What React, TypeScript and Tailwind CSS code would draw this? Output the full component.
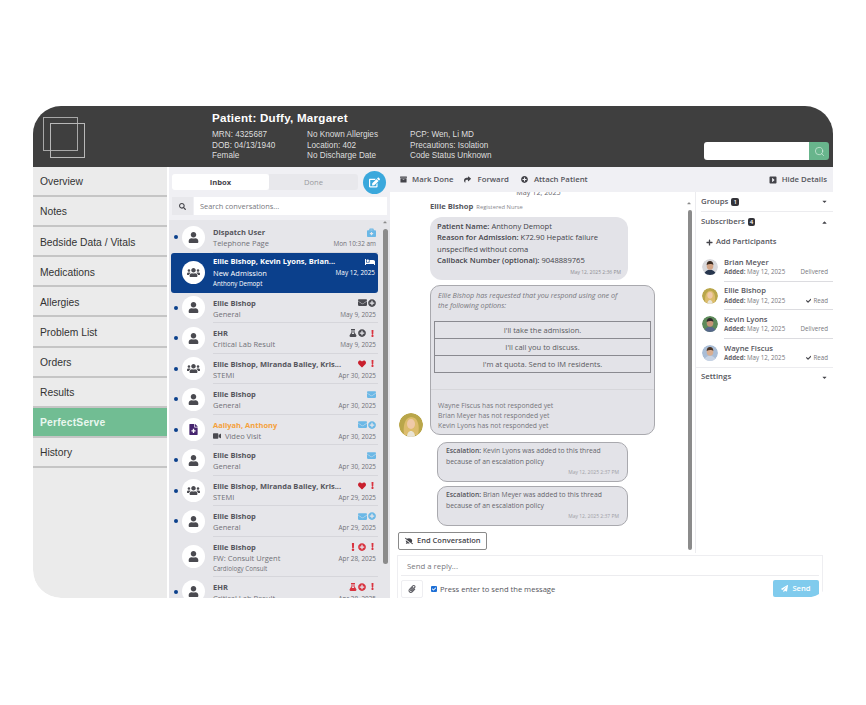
import {
  FaUser, FaUsers, FaEnvelope, FaPlusCircle, FaBed, FaHeart, FaExclamation, FaVideo, FaFlask,
  FaEdit, FaSearch, FaPaperclip, FaPaperPlane, FaShare, FaPlus, FaCheck, FaCaretDown, FaCaretUp,
  FaCommentSlash, FaArchive, FaCaretSquareRight, FaBriefcaseMedical, FaFileMedical,
} from "react-icons/fa";
import { Search } from "lucide-react";
import type { ReactNode } from "react";

const navItems = ["Overview", "Notes", "Bedside Data / Vitals", "Medications", "Allergies", "Problem List", "Orders", "Results", "PerfectServe", "History"];

type Conv = {
  title: string;
  sub: string;
  date: string;
  extra?: string;
  group?: boolean;
  unread?: boolean;
  selected?: boolean;
  orange?: boolean;
  clip?: boolean;
  video?: boolean;
  icons: ReactNode;
};

const mail = <FaEnvelope className="text-[9px] text-[#6bb8e6]" />;
const plusBlue = <FaPlusCircle className="text-[8px] text-[#6bb8e6]" />;
const plusGray = <FaPlusCircle className="text-[8px] text-[#4a4a50]" />;
const plusRed = <FaPlusCircle className="text-[8px] text-[#d9333f]" />;
const bang = <FaExclamation className="ml-[2px] text-[7px] text-[#d9333f]" />;

const conversations: Conv[] = [
  { title: "Dispatch User", sub: "Telephone Page", date: "Mon 10:32 am", unread: true, icons: <FaBriefcaseMedical className="text-[9px] text-[#6bb8e6]" /> },
  { title: "Ellie Bishop, Kevin Lyons, Brian...", sub: "New Admission", date: "May 12, 2025", extra: "Anthony Demopt", group: true, selected: true, icons: <FaBed className="text-[10px] text-white" /> },
  { title: "Ellie Bishop", sub: "General", date: "May 9, 2025", unread: true, icons: <><FaEnvelope className="text-[9px] text-[#4a4a50]" />{plusGray}</> },
  { title: "EHR", sub: "Critical Lab Result", date: "May 9, 2025", unread: true, icons: <><FaFlask className="text-[8px] text-[#4a4a50]" />{plusGray}{bang}</> },
  { title: "Ellie Bishop, Miranda Bailey, Kris...", sub: "STEMI", date: "Apr 30, 2025", group: true, unread: true, icons: <><FaHeart className="text-[8px] text-[#c9202e]" />{bang}</> },
  { title: "Ellie Bishop", sub: "General", date: "Apr 30, 2025", unread: true, icons: mail },
  { title: "Aaliyah, Anthony", sub: "Video Visit", date: "Apr 30, 2025", unread: true, orange: true, video: true, clip: true, icons: <>{mail}{plusBlue}</> },
  { title: "Ellie Bishop", sub: "General", date: "Apr 30, 2025", unread: true, icons: mail },
  { title: "Ellie Bishop, Miranda Bailey, Kris...", sub: "STEMI", date: "Apr 29, 2025", group: true, unread: true, icons: <><FaHeart className="text-[8px] text-[#c9202e]" />{bang}</> },
  { title: "Ellie Bishop", sub: "General", date: "Apr 29, 2025", unread: true, icons: <>{mail}{plusBlue}</> },
  { title: "Ellie Bishop", sub: "FW: Consult Urgent", date: "Apr 28, 2025", extra: "Cardiology Consult", icons: <><FaExclamation className="text-[8px] text-[#d9333f]" />{plusRed}{bang}</> },
  { title: "EHR", sub: "Critical Lab Result", date: "Apr 28, 2025", unread: true, icons: <><FaFlask className="text-[8px] text-[#d9333f]" />{plusRed}{bang}</> },
];

function Face({ skin, hair, bg, size, shirt }: { skin: string; hair: string; bg: string; size: number; shirt: string }) {
  return (
    <svg width={size} height={size} viewBox="0 0 24 24" className="shrink-0 rounded-full">
      <circle cx="12" cy="12" r="12" fill={bg} />
      <path d="M3 24c1-6 5-8 9-8s8 2 9 8z" fill={shirt} />
      <ellipse cx="12" cy="10" rx="5" ry="6" fill={skin} />
      <path d="M7 9c0-4 2-6 5-6s5 2 5 6c-2-2-7-2-10 0z" fill={hair} />
    </svg>
  );
}

function BlondeFace({ size }: { size: number }) {
  return (
    <svg width={size} height={size} viewBox="0 0 24 24" className="shrink-0 rounded-full">
      <circle cx="12" cy="12" r="12" fill="#b9a64a" />
      <path d="M5 22c-1-8 0-17 7-18 7 0 9 9 7 18z" fill="#dcbc6c" />
      <ellipse cx="12" cy="11" rx="4" ry="5" fill="#efc9a8" />
      <path d="M8 24c0-4 2-6 4-6s4 2 4 6z" fill="#e9e4d6" />
    </svg>
  );
}

function ConversationRow({ c }: { c: Conv }) {
  const tall = !!c.extra;
  if (c.selected) {
    return (
      <div className="ml-[2px] mr-[12px] flex h-[40px] items-center rounded-[3px] bg-[#0b408c] pr-[3px] text-white">
        <div className="ml-[11px] flex h-[23px] w-[23px] shrink-0 items-center justify-center rounded-full bg-white">
          <FaUsers className="text-[13px] text-[#4a4a50]" />
        </div>
        <div className="ml-[8px] min-w-0 flex-1">
          <div className="flex items-center justify-between">
            <span className="text-[7.5px] font-bold leading-[11px]">{c.title}</span>
            {c.icons}
          </div>
          <div className="flex items-center justify-between">
            <span className="text-[7.5px] leading-[12px]">{c.sub}</span>
            <span className="text-[6.4px] leading-[12px]">{c.date}</span>
          </div>
          <div className="text-[6.2px] leading-[10px]">{c.extra}</div>
        </div>
      </div>
    );
  }
  return (
    <div className={`${tall ? "h-[40px]" : "h-[30.5px]"} mr-[12px] flex items-center pl-[5px]`}>
      <span className={`h-[4px] w-[4px] shrink-0 rounded-full ${c.unread ? "bg-[#0b408c]" : ""}`} />
      <div className="ml-[4px] flex h-[23px] w-[23px] shrink-0 items-center justify-center rounded-full bg-white">
        {c.clip ? (
          <FaFileMedical className="text-[11px] text-[#46256f]" />
        ) : c.group ? (
          <FaUsers className="text-[13px] text-[#4a4a50]" />
        ) : (
          <FaUser className="text-[11px] text-[#4a4a50]" />
        )}
      </div>
      <div className="ml-[8px] h-full min-w-0 flex-1 border-b border-[#d6d6db] pr-[2px] pt-[4px]">
        <div className="flex items-center justify-between">
          <span className={`text-[7.5px] font-bold leading-[12px] ${c.orange ? "text-[#f5a13c]" : "text-[#55555c]"}`}>{c.title}</span>
          <span className="flex items-center gap-[1px]">{c.icons}</span>
        </div>
        <div className="flex items-center justify-between">
          <span className="flex items-center gap-[4px] text-[7.5px] leading-[11px] text-[#717178]">
            {c.video && <FaVideo className="text-[8px] text-[#4a4a50]" />}
            {c.sub}
          </span>
          <span className="text-[6.4px] leading-[11px] text-[#717178]">{c.date}</span>
        </div>
        {c.extra && <div className="text-[6.2px] leading-[10px] text-[#717178]">{c.extra}</div>}
      </div>
    </div>
  );
}

function Escalation({ name }: { name: string }) {
  return (
    <div className="ml-[47px] h-[40px] w-[191px] rounded-[10px] border border-[#a9a9ae] bg-[#e3e3e8] px-[8px] pt-[3px] text-[6.8px] leading-[10.5px] text-[#66666c]">
      <div>
        <b className="font-semibold text-[#55555c]">Escalation:</b> {name} was added to this thread
      </div>
      <div>because of an escalation policy</div>
      <div className="mt-[1px] text-right text-[5px] leading-[8px] text-[#a0a0a6]">May 12, 2025 2:37 PM</div>
    </div>
  );
}

const subscribers = [
  { name: "Brian Meyer", status: "Delivered", face: <Face size={16} skin="#d3a587" hair="#3a2a20" bg="#d9d9dc" shirt="#27364d" /> },
  { name: "Ellie Bishop", status: "Read", face: <BlondeFace size={16} /> },
  { name: "Kevin Lyons", status: "Delivered", face: <Face size={16} skin="#c79478" hair="#2c2a2a" bg="#5d8a5a" shirt="#56688a" /> },
  { name: "Wayne Fiscus", status: "Read", face: <Face size={16} skin="#d9ae90" hair="#4a3426" bg="#a9bdd6" shirt="#c7d3e4" /> },
];

export default function App() {
  return (
    <div className="h-[705px] w-[866px] overflow-hidden bg-white pl-[33px] pt-[106px] font-['Open_Sans',sans-serif]">
      <div className="flex h-[492px] w-[800px] flex-col overflow-hidden rounded-[28px] bg-white">
        <header className="flex h-[61px] shrink-0 bg-[#3f3f3f] font-['Liberation_Sans',sans-serif] text-[#dedede]">
          <div className="w-[179px] shrink-0 pl-[10px] pt-[11px]">
            <div className="relative h-[42px] w-[43px]">
              <div className="h-[34px] w-[35px] border border-[#a8a8a8]" />
              <div className="absolute left-[7px] top-[6px] h-[35px] w-[35px] border border-[#b8b8b8]" />
            </div>
          </div>
          <div className="w-[492px] shrink-0 pt-[5px]">
            <div className="text-[11.6px] font-bold leading-[14px] tracking-[0.25px] text-white">Patient: Duffy, Margaret</div>
            <div className="mt-[5px] flex text-[8.2px] leading-[10.6px]">
              <div className="w-[95px]">
                <div>MRN: 4325687</div>
                <div>DOB: 04/13/1940</div>
                <div>Female</div>
              </div>
              <div className="w-[103px]">
                <div>No Known Allergies</div>
                <div>Location: 402</div>
                <div>No Discharge Date</div>
              </div>
              <div>
                <div>PCP: Wen, Li MD</div>
                <div>Precautions: Isolation</div>
                <div>Code Status Unknown</div>
              </div>
            </div>
          </div>
          <div className="mb-[7px] flex h-[18px] w-[125px] shrink-0 self-end">
            <div className="w-[105px] rounded-l-[3px] bg-white" />
            <div className="flex w-[20px] items-center justify-center rounded-r-[3px] bg-[#68b58c]">
              <Search size={11} strokeWidth={1.5} className="text-[#d8efe2]" />
            </div>
          </div>
        </header>

        <div className="flex min-h-0 flex-1">
          <nav className="w-[134px] shrink-0 rounded-bl-[28px] bg-[#ebebeb] font-['Liberation_Sans',sans-serif]">
            {navItems.map((item) => (
              <div
                key={item}
                className={`flex h-[30.1px] items-center border-b-2 border-[#c5c5c5] pl-[7px] pt-[2px] text-[10.3px] ${
                  item === "PerfectServe" ? "bg-[#71bd93] font-bold tracking-[0.2px] text-[#e9f7ef]" : "text-[#333333]"
                }`}
              >
                {item}
              </div>
            ))}
          </nav>

          <section className="relative ml-[2px] flex w-[221px] shrink-0 flex-col bg-[#e6e6ea]">
            <div className="flex h-[30px] shrink-0 items-center bg-[#f0f0f4] pl-[3px]">
              <div className="flex h-[16px] w-[186px] text-[7.6px] font-semibold leading-[16px]">
                <div className="w-[97px] rounded-[3px] bg-white text-center font-bold text-[#44444a]">Inbox</div>
                <div className="w-[89px] rounded-r-[3px] bg-[#e8e8ec] text-center font-normal text-[#9a9aa0]">Done</div>
              </div>
              <div className="ml-[5px] flex h-[23px] w-[23px] items-center justify-center rounded-full bg-[#3aa8dc]">
                <FaEdit className="text-[11px] text-white" />
              </div>
            </div>
            <div className="flex h-[23px] shrink-0 items-start bg-[#f0f0f4] pl-[3px]">
              <div className="flex h-[18px] w-[21px] items-center justify-center bg-[#e8e8ec]">
                <FaSearch className="text-[7px] text-[#44444a]" />
              </div>
              <div className="ml-[1px] h-[18px] w-[193px] bg-white pl-[6px] text-[7.4px] leading-[18px] text-[#77777d]">Search conversations...</div>
            </div>
            <div className="min-h-0 flex-1 overflow-hidden pt-[2px]">
              {conversations.map((c, i) => (
                <ConversationRow key={i} c={c} />
              ))}
            </div>
            <div className="absolute right-[2px] top-[62px] h-[335px] w-[5px] rounded-full bg-[#8b8b8b]" />
            <FaCaretUp className="absolute right-[2px] top-[52px] text-[6px] text-[#8b8b8b]" />
          </section>

          <section className="flex min-w-0 flex-1 flex-col bg-white">
            <div className="flex h-[25px] shrink-0 items-center bg-[#f0f0f4] pl-[10px] pr-[6px] text-[7.8px] font-semibold text-[#55555c]">
              <FaArchive className="text-[7px] text-[#44444a]" />
              <span className="ml-[5px]">Mark Done</span>
              <FaShare className="ml-[11px] text-[7px] text-[#44444a]" />
              <span className="ml-[6px]">Forward</span>
              <FaPlusCircle className="ml-[12px] text-[7px] text-[#44444a]" />
              <span className="ml-[6px]">Attach Patient</span>
              <FaCaretSquareRight className="ml-auto text-[8px] text-[#44444a]" />
              <span className="ml-[5px]">Hide Details</span>
            </div>

            <div className="flex h-[361px] shrink-0">
              <div className="relative w-[303px] shrink-0 overflow-hidden">
                <div className="-mt-[5px] pr-[6px] text-center text-[7.2px] leading-[10px] text-[#66666c]">May 12, 2025</div>
                <div className="ml-[40px] mt-[4px] flex items-baseline gap-[3px] leading-[10px]">
                  <span className="text-[7.6px] font-bold text-[#55555c]">Ellie Bishop</span>
                  <span className="text-[5.8px] text-[#88888e]">Registered Nurse</span>
                </div>
                <div className="ml-[40px] mt-[5px] h-[63px] w-[198px] rounded-[12px] bg-[#e3e3e8] px-[7px] pt-[4px] text-[7.6px] leading-[11.4px] text-[#44444a]">
                  <div><b className="font-semibold">Patient Name:</b> Anthony Demopt</div>
                  <div><b className="font-semibold">Reason for Admission:</b> K72.90  Hepatic failure</div>
                  <div>unspecified without coma</div>
                  <div><b className="font-semibold">Callback Number (optional):</b> 9048889765</div>
                  <div className="text-right text-[5px] leading-[11px] text-[#8e8e94]">May 12, 2025 2:36 PM</div>
                </div>

                <div className="relative">
                  <div className="ml-[40px] mt-[5px] h-[150px] w-[225px] rounded-[10px] border border-[#a9a9ae] bg-[#e3e3e8] pt-[4px] text-[7.2px] leading-[10px] text-[#77777d]">
                    <div className="px-[7px] italic">
                      Ellie Bishop has requested that you respond using one of
                      <br />
                      the following options:
                    </div>
                    <div className="mx-[3px] mt-[11px] border-[1.5px] border-[#8a8a90] text-center text-[7.5px] font-medium leading-[16px] text-[#5a5a60] [&>div+div]:border-t-[1.5px] [&>div+div]:border-[#8a8a90]">
                      <div>I'll take the admission.</div>
                      <div>I'll call you to discuss.</div>
                      <div>I'm at quota. Send to IM residents.</div>
                    </div>
                    <div className="mt-[16px] border-t border-[#d6d6da] px-[7px] pt-[11px] text-[6.8px]">
                      <div>Wayne Fiscus has not responded yet</div>
                      <div>Brian Meyer has not responded yet</div>
                      <div>Kevin Lyons has not responded yet</div>
                    </div>
                  </div>
                  <div className="absolute left-[9px] top-[128px]">
                    <BlondeFace size={24} />
                  </div>
                </div>

                <div className="mt-[7px] flex flex-col gap-[4px]">
                  <Escalation name="Kevin Lyons" />
                  <Escalation name="Brian Meyer" />
                </div>

                <div className="ml-[8px] mt-[6px] flex h-[18px] w-[89px] items-center gap-[4px] rounded-[2px] border border-[#8a8a8a] bg-white pl-[6px] text-[7.5px] font-semibold text-[#44444a]">
                  <FaCommentSlash className="text-[8px] text-[#44444a]" />
                  End Conversation
                </div>

                <div className="absolute right-[1px] top-[18px] h-[340px] w-[4px] rounded-full bg-[#8b8b8b]" />
                <FaCaretUp className="absolute right-[1px] top-[8px] text-[6px] text-[#8b8b8b]" />
              </div>

              <aside className="ml-[2px] min-w-0 flex-1 border-l border-[#ececef] pl-[5px] text-[#55555c]">
                <div className="flex h-[20px] items-center justify-between border-b border-[#ececef] pr-[5px] text-[7.8px] font-semibold">
                  <span className="flex items-center gap-[3px]">
                    Groups <span className="rounded-[2px] bg-[#333338] px-[2px] text-[6px] leading-[8px] text-white">1</span>
                  </span>
                  <FaCaretDown className="text-[7px] text-[#44444a]" />
                </div>
                <div className="flex h-[20px] items-center justify-between pr-[5px] text-[7.8px] font-semibold">
                  <span className="flex items-center gap-[3px]">
                    Subscribers <span className="rounded-[2px] bg-[#333338] px-[2px] text-[6px] leading-[8px] text-white">4</span>
                  </span>
                  <FaCaretUp className="text-[7px] text-[#44444a]" />
                </div>
                <div className="flex h-[20px] items-center gap-[3px] pl-[5px] text-[7.6px] font-semibold">
                  <FaPlus className="text-[7px] text-[#44444a]" /> Add Participants
                </div>
                <div className="mt-[1px]">
                  {subscribers.map((s, i) => (
                    <div key={s.name} className="flex h-[28.5px] items-center">
                      <span className="ml-[1px]">{s.face}</span>
                      <div className={`ml-[6px] flex h-full min-w-0 flex-1 flex-col justify-center pr-[5px] ${i < 3 ? "border-b border-[#dcdce0]" : ""}`}>
                        <div className="text-[7.6px] font-semibold leading-[10.5px]">{s.name}</div>
                        <div className="flex items-center justify-between text-[6.2px] leading-[10px] text-[#77777d]">
                          <span><b className="font-bold text-[#66666c]">Added:</b> May 12, 2025</span>
                          <span className="flex items-center gap-[2px]">
                            {s.status === "Read" && <FaCheck className="text-[5.5px] text-[#44444a]" />}
                            {s.status}
                          </span>
                        </div>
                      </div>
                    </div>
                  ))}
                </div>
                <div className="-ml-[5px] flex h-[19px] items-center justify-between border-t border-[#ececef] pl-[5px] pr-[5px] text-[7.8px] font-semibold">
                  Settings
                  <FaCaretDown className="text-[7px] text-[#44444a]" />
                </div>
              </aside>
            </div>

            <div className="ml-[7px] mr-[10px] mt-[2px] flex-1 border border-b-0 border-[#eeeef1] px-[3px]">
              <div className="h-[20px] border-b border-[#ececef] pl-[6px] text-[7.8px] leading-[21px] text-[#77777d]">Send a reply...</div>
              <div className="mt-[4px] flex items-start">
                <div className="flex h-[18px] w-[22px] items-center justify-center rounded-[2px] border border-[#eeeef1]">
                  <FaPaperclip className="text-[8px] text-[#55555c]" />
                </div>
                <span className="ml-[8px] mt-[6px] flex h-[6px] w-[6px] items-center justify-center rounded-[1px] bg-[#1d6fd6]">
                  <FaCheck className="text-[4px] text-white" />
                </span>
                <span className="ml-[3px] mt-[3px] text-[7.6px] leading-[12px] text-[#55555c]">Press enter to send the message</span>
                <div className="ml-auto flex h-[17px] w-[46px] items-center justify-center gap-[4px] rounded-[2px] bg-[#80cbed] text-[7.6px] font-semibold text-white">
                  <FaPaperPlane className="text-[7px]" /> Send
                </div>
              </div>
            </div>
          </section>
        </div>
      </div>
    </div>
  );
}
